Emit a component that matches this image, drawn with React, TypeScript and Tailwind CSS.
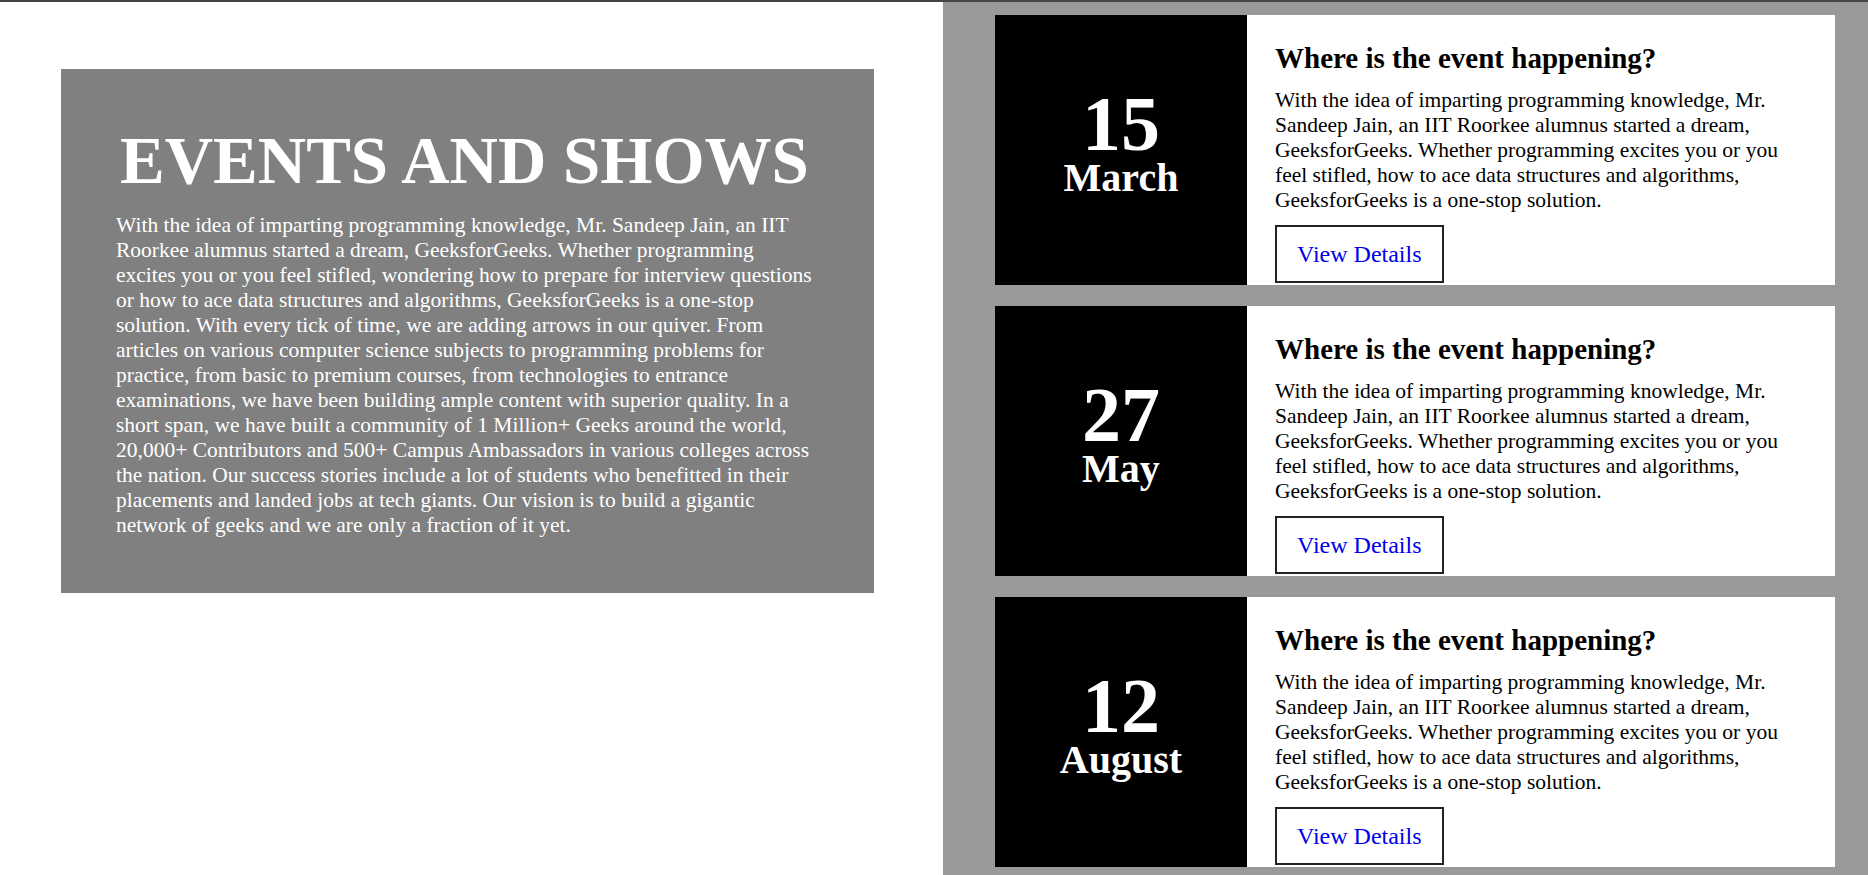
const events = [
  { day: "15", month: "March" },
  { day: "27", month: "May" },
  { day: "12", month: "August" },
];

const blurb =
  "With the idea of imparting programming knowledge, Mr. Sandeep Jain, an IIT Roorkee alumnus started a dream, GeeksforGeeks. Whether programming excites you or you feel stifled, how to ace data structures and algorithms, GeeksforGeeks is a one-stop solution.";

const about =
  "With the idea of imparting programming knowledge, Mr. Sandeep Jain, an IIT Roorkee alumnus started a dream, GeeksforGeeks. Whether programming excites you or you feel stifled, wondering how to prepare for interview questions or how to ace data structures and algorithms, GeeksforGeeks is a one-stop solution. With every tick of time, we are adding arrows in our quiver. From articles on various computer science subjects to programming problems for practice, from basic to premium courses, from technologies to entrance examinations, we have been building ample content with superior quality. In a short span, we have built a community of 1 Million+ Geeks around the world, 20,000+ Contributors and 500+ Campus Ambassadors in various colleges across the nation. Our success stories include a lot of students who benefitted in their placements and landed jobs at tech giants. Our vision is to build a gigantic network of geeks and we are only a fraction of it yet.";

const EventCard = ({ day, month }: { day: string; month: string }) => (
  <div className="flex h-[270px] w-[840px] shrink-0">
    <div className="w-[252px] shrink-0 bg-black text-white font-bold flex flex-col items-center justify-center pb-[13px]">
      <span className="text-[78px] leading-[68px]">{day}</span>
      <span className="text-[40px] leading-[40px]">{month}</span>
    </div>
    <div className="flex-1 bg-white text-black px-[28px] pt-[27px]">
      <h2 className="text-[29px] font-bold leading-[33px] mb-[13px]">
        Where is the event happening?
      </h2>
      <p className="text-[21.5px] leading-[25px] mb-[12px]">{blurb}</p>
      <button
        type="button"
        className="border-2 border-[#222] bg-white px-[20px] py-[13px] text-[24px] leading-[28px] text-[#0000ee]"
      >
        View Details
      </button>
    </div>
  </div>
);

export default function App() {
  return (
    <div className="h-[875px] overflow-hidden bg-white font-['Liberation_Serif',serif] flex flex-col">
      <div className="h-[2px] shrink-0 bg-[#444]" />
      <div className="flex flex-1 min-h-0">
        <div className="w-[943px] shrink-0 pt-[67px] pl-[61px]">
          <div className="w-[813px] bg-[#808080] text-white pl-[55px] pr-[57px] pt-[53px] pb-[55px]">
            <h1 className="text-[67px] font-bold leading-[77px] pl-[4px] mb-[14px]">
              EVENTS AND SHOWS
            </h1>
            <p className="text-[21.5px] leading-[25px]">{about}</p>
          </div>
        </div>
        <div className="flex-1 bg-[#999] pt-[13px] pl-[52px] flex flex-col gap-[21px]">
          {events.map((e) => (
            <EventCard key={e.day} day={e.day} month={e.month} />
          ))}
        </div>
      </div>
    </div>
  );
}
